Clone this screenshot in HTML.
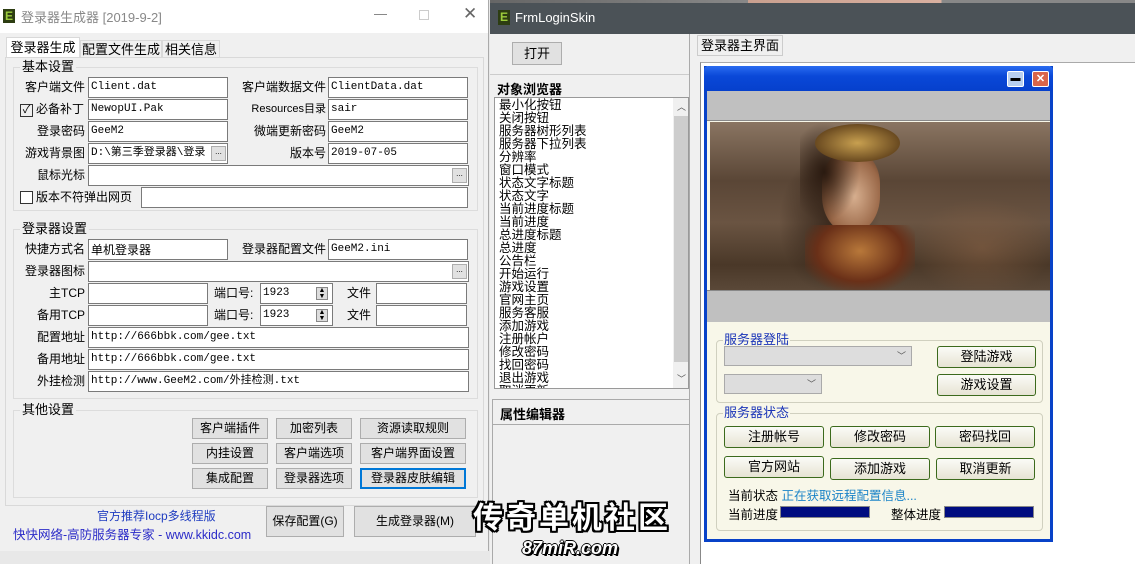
<!DOCTYPE html><html><head><meta charset="utf-8"><style>
*{margin:0;padding:0;box-sizing:border-box}
body{width:1135px;height:564px;overflow:hidden;position:relative;background:#e8e8e8;font-family:"Liberation Sans","Noto Sans CJK SC",sans-serif;font-size:12px;color:#000}
.a{position:absolute}
.in{position:absolute;background:#fff;border:1px solid #7a7a7a;height:21px;font-family:"Liberation Mono","Noto Sans CJK SC",monospace;font-size:11px;line-height:19px;padding-left:2px;white-space:nowrap;overflow:hidden}
.lb{position:absolute;text-align:right;line-height:21px;white-space:nowrap}
.bt{position:absolute;background:#e1e1e1;border:1px solid #adadad;text-align:center;font-size:12px;white-space:nowrap}
.dot{position:absolute;width:15px;height:15px;background:#e1e1e1;border:1px solid #adadad;font-size:8px;line-height:10px;text-align:center}
.grp{position:absolute;border:1px solid #dcdcdc}
.gt{position:absolute;background:#f0f0f0;padding:0 2px;top:-9px;left:6px;font-size:13px;line-height:16px}
.xb{position:absolute;background:linear-gradient(#fbfbf7,#e6e3d3);border:1px solid #3c6a1c;border-radius:3px;text-align:center;font-size:13px;line-height:19px}
.xg{position:absolute;border:1px solid #d0d0bf;border-radius:4px}
.xgt{position:absolute;top:-9px;left:6px;background:#f8f7e9;color:#1b35b8;padding:0 1px;font-size:13px;line-height:16px}
.li{line-height:13px;font-size:12.5px;white-space:nowrap}
</style></head><body>
<!-- Left window -->
<div class="a" style="left:0;top:0;width:489px;height:551px;background:#f0f0f0;border-right:1px solid #aaa">
 <div class="a" style="left:0;top:0;width:488px;height:33px;background:#fff"></div>
 <div class="a" style="left:3px;top:9px;width:12px;height:14px;background:#2d3d12;color:#9ccc3c;font-weight:bold;font-size:12px;line-height:14px;text-align:center">E</div>
 <div class="a" style="left:21px;top:7px;color:#888;font-size:13px">登录器生成器 [2019-9-2]</div>
 <div class="a" style="left:374px;top:6px;color:#777;font-size:13px">—</div>
 <div class="a" style="left:419px;top:10px;width:10px;height:10px;border:1px solid #ccc"></div>
 <div class="a" style="left:463px;top:4px;color:#666;font-size:17px">✕</div>
 <div class="a" style="left:6px;top:37px;width:74px;height:21px;background:#fff;border:1px solid #d9d9d9;border-bottom:none;text-align:center;line-height:20px;font-size:13px">登录器生成</div>
 <div class="a" style="left:80px;top:40px;width:82px;height:18px;border:1px solid #d9d9d9;text-align:center;line-height:17px;font-size:13px">配置文件生成</div>
 <div class="a" style="left:162px;top:40px;width:58px;height:18px;border:1px solid #d9d9d9;text-align:center;line-height:17px;font-size:13px">相关信息</div>
 <div class="a" style="left:5px;top:57px;width:479px;height:449px;border:1px solid #d9d9d9"></div>

 <div class="grp" style="left:13px;top:67px;width:465px;height:144px"><span class="gt">基本设置</span></div>
 <div class="lb" style="left:0;width:85px;top:77px">客户端文件</div><div class="in" style="left:88px;top:77px;width:140px">Client.dat</div>
 <div class="lb" style="left:230px;width:96px;top:77px">客户端数据文件</div><div class="in" style="left:328px;top:77px;width:140px">ClientData.dat</div>
 <div class="a" style="left:20px;top:104px;width:13px;height:13px;border:1px solid #333;font-size:11px;line-height:11px;text-align:center">✓</div>
 <div class="lb" style="left:36px;top:99px">必备补丁</div><div class="in" style="left:88px;top:99px;width:140px">NewopUI.Pak</div>
 <div class="lb" style="left:230px;width:96px;top:99px;font-size:11px">Resources目录</div><div class="in" style="left:328px;top:99px;width:140px">sair</div>
 <div class="lb" style="left:0;width:85px;top:121px">登录密码</div><div class="in" style="left:88px;top:121px;width:140px">GeeM2</div>
 <div class="lb" style="left:230px;width:96px;top:121px">微端更新密码</div><div class="in" style="left:328px;top:121px;width:140px">GeeM2</div>
 <div class="lb" style="left:0;width:85px;top:143px">游戏背景图</div><div class="in" style="left:88px;top:143px;width:140px">D:\第三季登录器\登录</div><div class="dot" style="left:211px;top:146px">...</div>
 <div class="lb" style="left:230px;width:96px;top:143px">版本号</div><div class="in" style="left:328px;top:143px;width:140px">2019-07-05</div>
 <div class="lb" style="left:0;width:85px;top:165px">鼠标光标</div><div class="in" style="left:88px;top:165px;width:381px"></div><div class="dot" style="left:452px;top:168px">...</div>
 <div class="a" style="left:20px;top:191px;width:13px;height:13px;border:1px solid #333;background:#fff"></div>
 <div class="lb" style="left:36px;top:187px">版本不符弹出网页</div><div class="in" style="left:141px;top:187px;width:327px"></div>

 <div class="grp" style="left:13px;top:229px;width:465px;height:170px"><span class="gt">登录器设置</span></div>
 <div class="lb" style="left:0;width:85px;top:239px">快捷方式名</div><div class="in" style="left:88px;top:239px;width:140px;font-family:'Noto Sans CJK SC';font-size:12px">单机登录器</div>
 <div class="lb" style="left:230px;width:96px;top:239px">登录器配置文件</div><div class="in" style="left:328px;top:239px;width:140px">GeeM2.ini</div>
 <div class="lb" style="left:0;width:85px;top:261px">登录器图标</div><div class="in" style="left:88px;top:261px;width:381px"></div><div class="dot" style="left:452px;top:264px">...</div>
 <div class="lb" style="left:0;width:85px;top:283px">主TCP</div><div class="in" style="left:88px;top:283px;width:120px"></div>
 <div class="lb" style="left:214px;top:283px">端口号:</div><div class="in" style="left:260px;top:283px;width:73px">1923</div><div class="a" style="left:316px;top:287px;width:12px;height:13px;background:#ddd;border:1px solid #888;font-size:7px;line-height:6px;text-align:center">▲<br>▼</div>
 <div class="lb" style="left:347px;top:283px">文件</div><div class="in" style="left:376px;top:283px;width:91px"></div>
 <div class="lb" style="left:0;width:85px;top:305px">备用TCP</div><div class="in" style="left:88px;top:305px;width:120px"></div>
 <div class="lb" style="left:214px;top:305px">端口号:</div><div class="in" style="left:260px;top:305px;width:73px">1923</div><div class="a" style="left:316px;top:309px;width:12px;height:13px;background:#ddd;border:1px solid #888;font-size:7px;line-height:6px;text-align:center">▲<br>▼</div>
 <div class="lb" style="left:347px;top:305px">文件</div><div class="in" style="left:376px;top:305px;width:91px"></div>
 <div class="lb" style="left:0;width:85px;top:327px">配置地址</div><div class="in" style="left:88px;top:327px;width:381px">http://666bbk.com/gee.txt</div>
 <div class="lb" style="left:0;width:85px;top:349px">备用地址</div><div class="in" style="left:88px;top:349px;width:381px">http://666bbk.com/gee.txt</div>
 <div class="lb" style="left:0;width:85px;top:371px">外挂检测</div><div class="in" style="left:88px;top:371px;width:381px">http://www.GeeM2.com/外挂检测.txt</div>

 <div class="grp" style="left:13px;top:410px;width:465px;height:88px"><span class="gt">其他设置</span></div>
 <div class="bt" style="left:192px;top:418px;width:76px;height:21px;line-height:19px">客户端插件</div>
 <div class="bt" style="left:276px;top:418px;width:76px;height:21px;line-height:19px">加密列表</div>
 <div class="bt" style="left:360px;top:418px;width:106px;height:21px;line-height:19px">资源读取规则</div>
 <div class="bt" style="left:192px;top:443px;width:76px;height:21px;line-height:19px">内挂设置</div>
 <div class="bt" style="left:276px;top:443px;width:76px;height:21px;line-height:19px">客户端选项</div>
 <div class="bt" style="left:360px;top:443px;width:106px;height:21px;line-height:19px">客户端界面设置</div>
 <div class="bt" style="left:192px;top:468px;width:76px;height:21px;line-height:19px">集成配置</div>
 <div class="bt" style="left:276px;top:468px;width:76px;height:21px;line-height:19px">登录器选项</div>
 <div class="bt" style="left:360px;top:468px;width:106px;height:21px;line-height:17px;border:2px solid #0078d7">登录器皮肤编辑</div>
 <div class="a" style="left:97px;top:507px;color:#1f3cc0;font-size:12px">官方推荐Iocp多线程版</div>
 <div class="a" style="left:13px;top:524px;color:#2b2bc8;font-size:12.5px">快快网络-高防服务器专家 - www.kkidc.com</div>
 <div class="bt" style="left:266px;top:506px;width:78px;height:31px;line-height:29px">保存配置(G)</div>
 <div class="bt" style="left:354px;top:506px;width:122px;height:31px;line-height:29px">生成登录器(M)</div>
</div>

<!-- Right window -->
<div class="a" style="left:490px;top:0;width:645px;height:4px;background:linear-gradient(90deg,#666 0,#888 40%,#c9a08f 40%,#d9b0a0 70%,#888 70%)"></div>
<div class="a" style="left:490px;top:3px;width:645px;height:31px;background:#4b5257"></div>
<div class="a" style="left:498px;top:10px;width:12px;height:15px;background:#2d3d12;color:#9ccc3c;font-weight:bold;font-size:12px;line-height:15px;text-align:center">E</div>
<div class="a" style="left:515px;top:10px;color:#fff;font-size:13px">FrmLoginSkin</div>
<div class="a" style="left:490px;top:34px;width:200px;height:530px;background:#f0f0f0"></div>
<div class="a" style="left:690px;top:34px;width:445px;height:530px;background:#f0f0f0"></div>
<div class="bt" style="left:512px;top:42px;width:50px;height:23px;line-height:21px;font-size:13px">打开</div>
<div class="a" style="left:490px;top:74px;width:200px;height:1px;background:#ccc"></div>
<div class="a" style="left:497px;top:79px;font-weight:bold;font-size:13px">对象浏览器</div>
<div class="a" style="left:494px;top:97px;width:195px;height:292px;background:#fff;border:1px solid #999;overflow:hidden">
 <div class="a" style="left:178px;top:0;width:16px;height:292px;background:#f0f0f0"><div class="a" style="left:1px;top:18px;width:14px;height:246px;background:#cdcdcd"></div><div class="a" style="left:4px;top:2px;font-size:9px;color:#555">︿</div><div class="a" style="left:4px;top:274px;font-size:9px;color:#555">﹀</div></div>
 <div class="a li" style="left:4px;top:1px">最小化按钮<br>关闭按钮<br>服务器树形列表<br>服务器下拉列表<br>分辨率<br>窗口模式<br>状态文字标题<br>状态文字<br>当前进度标题<br>当前进度<br>总进度标题<br>总进度<br>公告栏<br>开始运行<br>游戏设置<br>官网主页<br>服务客服<br>添加游戏<br>注册帐户<br>修改密码<br>找回密码<br>退出游戏<br>取消更新</div>
</div>
<div class="a" style="left:492px;top:399px;width:198px;height:165px;border-top:1px solid #aaa;border-left:1px solid #aaa"></div>
<div class="a" style="left:500px;top:404px;font-weight:bold;font-size:13px">属性编辑器</div>
<div class="a" style="left:492px;top:424px;width:198px;height:1px;background:#aaa"></div>
<div class="a" style="left:689px;top:34px;width:1px;height:530px;background:#aaa"></div>
<div class="a" style="left:697px;top:35px;width:86px;height:21px;border:1px solid #ccc;background:#f0f0f0;text-align:center;line-height:20px;font-size:13px">登录器主界面</div>
<div class="a" style="left:700px;top:62px;width:435px;height:502px;background:#fff;border-left:1px solid #888;border-top:1px solid #aaa"></div>
<!-- inner skin -->
<div class="a" style="left:704px;top:66px;width:349px;height:476px;background:#f8f7e9;border:3px solid #0842c8;border-top:none"></div>
<div class="a" style="left:704px;top:66px;width:349px;height:25px;background:linear-gradient(#2a6cf0,#0a48d8 40%,#0640cc);border-radius:4px 4px 0 0"></div>
<div class="a" style="left:1007px;top:71px;width:17px;height:16px;background:#b8cff0;border:1px solid #fff;border-radius:2px;font-size:10px;line-height:13px;text-align:center">▬</div>
<div class="a" style="left:1032px;top:71px;width:17px;height:16px;background:#d9654a;border:1px solid #fff;border-radius:2px;color:#fff;font-size:11px;line-height:14px;text-align:center;font-weight:bold">✕</div>
<div class="a" style="left:707px;top:91px;width:343px;height:30px;background:#c0c0c0;border-bottom:1px solid #888"></div>
<div class="a" style="left:710px;top:122px;width:340px;height:168px;background:linear-gradient(180deg,#8a7562,#5a4636 35%,#6a5442 60%,#4a3828 85%,#5a4838);"></div>
<div class="a" style="left:710px;top:122px;width:340px;height:168px;background:radial-gradient(ellipse 50px 70px at 35% 60%,rgba(40,25,15,.7),transparent),radial-gradient(ellipse 70px 50px at 80% 75%,rgba(140,100,70,.5),transparent)"></div>
<div class="a" style="left:822px;top:152px;width:58px;height:80px;border-radius:40% 40% 45% 45%;background:radial-gradient(ellipse at 55% 55%,#d8b090,#9a6848 60%,#3a2010)"></div>
<div class="a" style="left:800px;top:122px;width:60px;height:100px;background:radial-gradient(ellipse at 40% 50%,#2a1a10,transparent 70%)"></div>
<div class="a" style="left:815px;top:124px;width:85px;height:38px;border-radius:50%;background:radial-gradient(#c8a050,#6a4a20 70%,transparent)"></div>
<div class="a" style="left:805px;top:225px;width:110px;height:65px;background:radial-gradient(ellipse at 50% 40%,#b8783a,#6a3018 55%,transparent 80%)"></div>
<div class="a" style="left:707px;top:290px;width:343px;height:32px;background:#c0c0c0;border-top:1px solid #888"></div>
<div class="xg" style="left:716px;top:340px;width:327px;height:63px"><span class="xgt">服务器登陆</span></div>
<div class="a" style="left:724px;top:346px;width:188px;height:20px;background:#ddd;border:1px solid #aaa"><span class="a" style="right:5px;top:2px;font-size:9px;color:#555">﹀</span></div>
<div class="a" style="left:724px;top:374px;width:98px;height:20px;background:#ddd;border:1px solid #aaa"><span class="a" style="right:5px;top:2px;font-size:9px;color:#555">﹀</span></div>
<div class="xb" style="left:937px;top:346px;width:99px;height:22px">登陆游戏</div>
<div class="xb" style="left:937px;top:374px;width:99px;height:22px">游戏设置</div>
<div class="xg" style="left:716px;top:413px;width:327px;height:118px"><span class="xgt">服务器状态</span></div>
<div class="xb" style="left:724px;top:426px;width:100px;height:22px">注册帐号</div>
<div class="xb" style="left:830px;top:426px;width:100px;height:22px">修改密码</div>
<div class="xb" style="left:935px;top:426px;width:100px;height:22px">密码找回</div>
<div class="xb" style="left:724px;top:456px;width:100px;height:22px">官方网站</div>
<div class="xb" style="left:830px;top:458px;width:100px;height:22px">添加游戏</div>
<div class="xb" style="left:936px;top:458px;width:99px;height:22px">取消更新</div>
<div class="a" style="left:728px;top:485px;font-size:12.5px">当前状态 <span style="color:#1c84c8">正在获取远程配置信息...</span></div>
<div class="a" style="left:728px;top:504px;font-size:12.5px">当前进度</div>
<div class="a" style="left:780px;top:506px;width:90px;height:12px;background:#000c80;border:1px solid #888"></div>
<div class="a" style="left:891px;top:504px;font-size:12.5px">整体进度</div>
<div class="a" style="left:944px;top:506px;width:90px;height:12px;background:#000c80;border:1px solid #888"></div>
<!-- watermark -->
<div class="a" style="left:473px;top:495px;font-size:30px;font-weight:bold;color:#fff;letter-spacing:3px;font-family:'Noto Sans CJK SC',sans-serif;text-shadow:-2px 0 #000,2px 0 #000,0 -2px #000,0 2px #000,2px 2px #000,-2px -2px #000,2px -2px #000,-2px 2px #000;line-height:40px">传奇单机社区</div>
<div class="a" style="left:522px;top:538px;font-size:18px;font-weight:bold;font-style:italic;color:#fff;text-shadow:-1px 0 #000,1px 0 #000,0 -1px #000,0 1px #000,2px 2px #000;line-height:20px">87miR.com</div>
</body></html>
